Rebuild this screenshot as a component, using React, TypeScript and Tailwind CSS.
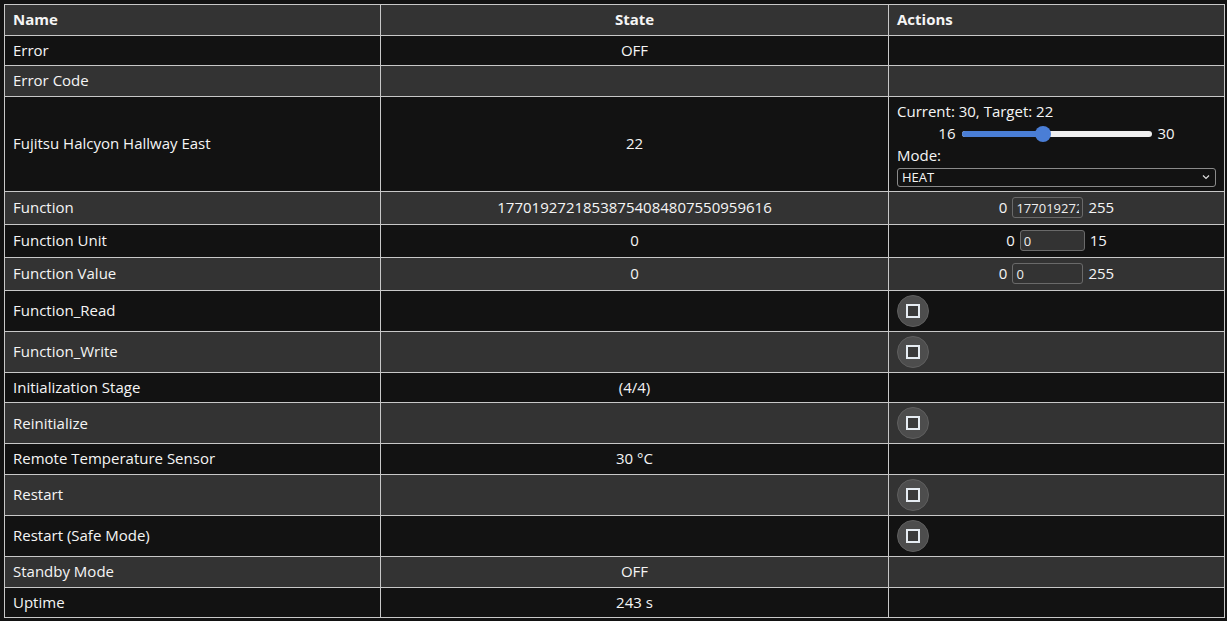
import React from "react";

type Row = {
  name: string;
  state?: string;
  action?: "button" | "number" | "climate";
  min?: number;
  max?: number;
  value?: string;
  inputWidth?: string;
};

const rows: Row[] = [
  { name: "Error", state: "OFF" },
  { name: "Error Code" },
  { name: "Fujitsu Halcyon Hallway East", state: "22", action: "climate" },
  {
    name: "Function",
    state: "17701927218538754084807550959616",
    action: "number",
    min: 0,
    max: 255,
    value: "17701927218538754084807550959616",
    inputWidth: "w-[71px]",
  },
  { name: "Function Unit", state: "0", action: "number", min: 0, max: 15, value: "0", inputWidth: "w-[65px]" },
  { name: "Function Value", state: "0", action: "number", min: 0, max: 255, value: "0", inputWidth: "w-[71px]" },
  { name: "Function_Read", action: "button" },
  { name: "Function_Write", action: "button" },
  { name: "Initialization Stage", state: "(4/4)" },
  { name: "Reinitialize", action: "button" },
  { name: "Remote Temperature Sensor", state: "30 °C" },
  { name: "Restart", action: "button" },
  { name: "Restart (Safe Mode)", action: "button" },
  { name: "Standby Mode", state: "OFF" },
  { name: "Uptime", state: "243 s" },
];

function PressButton() {
  return (
    <button className="flex h-8 w-8 items-center justify-center rounded-full border border-[#5f5f5f] bg-[#4d4d4d]">
      <span className="block h-[14px] w-[14px] border-2 border-[#e6ecf2] bg-[#3a3a3a]" />
    </button>
  );
}

function NumberAction({ row }: { row: Row }) {
  return (
    <div className="flex h-[24px] items-center justify-center gap-[5px]">
      <span>{row.min}</span>
      <input
        readOnly
        value={row.value}
        className={`${row.inputWidth} h-[21px] overflow-hidden rounded-[3px] border border-[#6a6a6a] bg-[#333333] px-[3px] text-[13px] leading-[19px] text-[#eeeeee] outline-none`}
      />
      <span>{row.max}</span>
    </div>
  );
}

function ClimateAction() {
  // target 22 on a 16..30 range
  const pct = ((22 - 16) / (30 - 16)) * 100;
  return (
    <div className="flex flex-col">
      <div className="h-[22px]">Current: 30, Target: 22</div>
      <div className="flex h-[22px] items-center justify-center gap-[6px]">
        <span>16</span>
        <div className="relative h-[6px] w-[190px] rounded-full bg-[#efefef]">
          <div className="h-full rounded-full bg-[#4a7ed6]" style={{ width: `${pct}%` }} />
          <div
            className="absolute top-1/2 h-[16px] w-[16px] -translate-x-1/2 -translate-y-1/2 rounded-full bg-[#4a7ed6]"
            style={{ left: `${pct}%` }}
          />
        </div>
        <span>30</span>
      </div>
      <div className="h-[22px]">Mode:</div>
      <div className="mt-[1px] flex h-[19px] items-center justify-between rounded-[3px] border border-[#8a8a8a] bg-[#121212] pl-[4px] pr-[4px] text-[13px] leading-[17px]">
        <span>HEAT</span>
        <svg width="10" height="10" viewBox="0 0 10 10" fill="none">
          <path d="M2 3.5 L5 6.5 L8 3.5" stroke="#dddddd" strokeWidth="1.2" />
        </svg>
      </div>
    </div>
  );
}

export default function App() {
  return (
    <div
      className="min-h-[621px] bg-[#121212] p-1 text-[15px] leading-[21.6px] text-[#f5f5f5]"
      style={{ fontFamily: '"Open Sans", "Noto Sans", sans-serif' }}
    >
      <table className="w-[1220px] table-fixed border-collapse border border-[#c8c8c8]">
        <colgroup>
          <col className="w-[376px]" />
          <col className="w-[508px]" />
          <col className="w-[336px]" />
        </colgroup>
        <thead>
          <tr className="bg-[#333333]">
            <th className="border border-[#c8c8c8] px-2 py-1 text-left font-bold">Name</th>
            <th className="border border-[#c8c8c8] px-2 py-1 text-center font-bold">State</th>
            <th className="border border-[#c8c8c8] px-2 py-1 text-left font-bold">Actions</th>
          </tr>
        </thead>
        <tbody>
          {rows.map((row, i) => (
            <tr key={row.name} className={i % 2 === 0 ? "bg-[#121212]" : "bg-[#333333]"}>
              <td className="border border-[#c8c8c8] px-2 py-1">{row.name}</td>
              <td className="whitespace-nowrap border border-[#c8c8c8] px-2 py-1 text-center">
                {row.state}
              </td>
              <td className="border border-[#c8c8c8] px-2 py-1">
                {row.action === "button" && <PressButton />}
                {row.action === "number" && <NumberAction row={row} />}
                {row.action === "climate" && <ClimateAction />}
              </td>
            </tr>
          ))}
        </tbody>
      </table>
    </div>
  );
}
